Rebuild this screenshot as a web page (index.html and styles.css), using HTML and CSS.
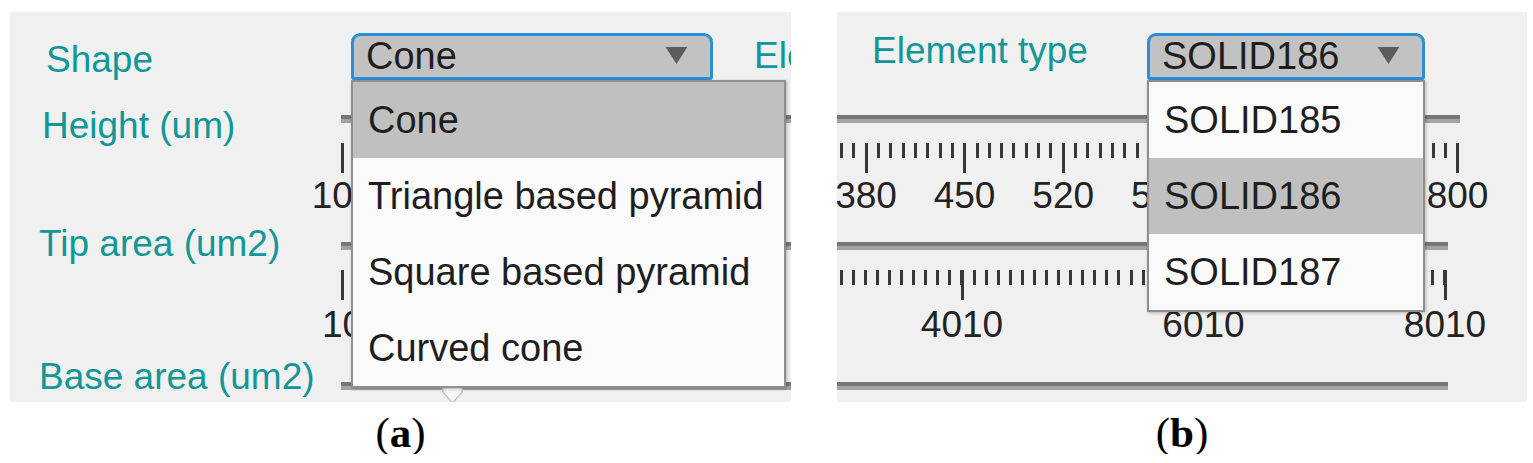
FILE: index.html
```html
<!DOCTYPE html>
<html lang="en">

<head>
    <meta charset="UTF-8">
    <meta name="viewport" content="width=device-width, initial-scale=1.0">
    <title>Indenter settings</title>
    <link rel="stylesheet" href="styles.css">
</head>

<body>
    <div class="figure">

        <!-- (a) shape dropdown -->
        <div class="subfigure subfigure-a">
            <div class="panel panel-a">
                <div class="label-column">
                    <div class="field-label shape-label">Shape</div>
                    <div class="field-label height-label">Height (um)</div>
                    <div class="field-label tip-label">Tip area (um2)</div>
                    <div class="field-label base-label">Base area (um2)</div>
                </div>

                <div class="control-column">
                    <div class="top-row">
                        <div class="dropdown dropdown-shape">
                            <span class="dropdown-value">Cone</span>
                            <svg class="dropdown-arrow" viewBox="0 0 23 18"><polygon points="0,0 23,0 11.5,18" /></svg>
                            <ul class="dropdown-list">
                                <li class="selected">Cone</li>
                                <li>Triangle based pyramid</li>
                                <li>Square based pyramid</li>
                                <li>Curved cone</li>
                            </ul>
                        </div>
                        <div class="field-label element-label-a">Element type</div>
                    </div>

                    <!-- tick labels under the open list are left out -->
                    <div class="slider slider-a slider-first">
                        <div class="slider-track"></div>
                        <div class="slider-ticks"></div>
                        <div class="slider-labels">
                            <span>100</span>
                        </div>
                    </div>

                    <div class="slider slider-a slider-second">
                        <div class="slider-track"></div>
                        <div class="slider-ticks"></div>
                        <div class="slider-labels">
                            <span>10</span>
                        </div>
                    </div>

                    <div class="slider slider-a slider-third">
                        <div class="slider-track"></div>
                        <svg class="slider-thumb" viewBox="0 0 21 22"><polygon points="0.75,0 0.75,10 10.5,21 20.25,10 20.25,0" /></svg>
                        <div class="slider-ticks"></div>
                    </div>
                </div>
            </div>
            <p class="caption">(<b>a</b>)</p>
        </div>

        <!-- (b) element type dropdown -->
        <div class="subfigure subfigure-b">
            <div class="panel panel-b">
                <div class="top-row">
                    <div class="field-label element-label-b">Element type</div>
                    <div class="dropdown dropdown-element">
                        <span class="dropdown-value">SOLID186</span>
                        <svg class="dropdown-arrow" viewBox="0 0 23 18"><polygon points="0,0 23,0 11.5,18" /></svg>
                        <ul class="dropdown-list">
                            <li>SOLID185</li>
                            <li class="selected">SOLID186</li>
                            <li>SOLID187</li>
                        </ul>
                    </div>
                </div>

                <div class="slider slider-b1 slider-first">
                    <div class="slider-track"></div>
                    <div class="slider-ticks"></div>
                    <div class="slider-labels">
                        <span>380</span><span>450</span><span>520</span><span>590</span><span></span><span></span><span>800</span>
                    </div>
                </div>

                <div class="slider slider-b2 slider-second">
                    <div class="slider-track"></div>
                    <div class="slider-ticks"></div>
                    <div class="slider-labels">
                        <span>4010</span><span>6010</span><span>8010</span>
                    </div>
                </div>

                <div class="slider slider-b2 slider-third">
                    <div class="slider-track"></div>
                    <div class="slider-ticks"></div>
                </div>
            </div>
            <p class="caption">(<b>b</b>)</p>
        </div>

    </div>
</body>

</html>
```

FILE: styles.css
```css
body {
    margin: 0;
    background-color: #fff;
    font-family: "Liberation Sans", Arial, sans-serif;
}

.figure {
    display: flex;
    gap: 46px;
    padding: 12px 0 0 10px;
}

.subfigure {
    display: flex;
    flex-direction: column;
}

.subfigure-a {
    width: 781px;
}

.subfigure-b {
    width: 690px;
}

.panel {
    position: relative;
    box-sizing: border-box;
    height: 390px;
    padding-top: 21px;
    overflow: hidden;
    background-color: #f0f0f0;
}

.panel-a {
    display: grid;
    grid-template-columns: 331px minmax(0, 1fr);
    align-items: start;
}

.control-column {
    min-width: 0;
}

/* labels */

.label-column {
    display: flex;
    flex-direction: column;
}

.field-label {
    font-size: 37px;
    line-height: 37px;
    color: #109797;
    white-space: nowrap;
}

.shape-label {
    margin-top: 8px;
    padding-left: 36px;
}

.height-label {
    margin-top: 29px;
    padding-left: 32px;
}

.tip-label {
    margin-top: 81px;
    padding-left: 29px;
}

.base-label {
    margin-top: 96px;
    padding-left: 29px;
}

/* this label runs past the panel edge */
.element-label-a {
    min-width: 0;
    margin: 4px 0 0 41px;
    overflow: hidden;
}

.element-label-b {
    box-sizing: border-box;
    width: 310px;
    margin-top: -1px;
    padding-left: 35px;
}

/* dropdown */

.top-row {
    display: flex;
    align-items: flex-start;
    height: 47px;
}

.dropdown {
    position: relative;
    z-index: 2;
    flex: none;
    box-sizing: border-box;
    height: 47px;
    padding-left: 12px;
    border: 3px solid #2b8ed6;
    border-radius: 9px 9px 3px 3px;
    background-color: #c2c2c2;
    font-size: 38px;
    line-height: 41px;
    color: #1e1e1e;
    white-space: nowrap;
}

.dropdown-shape {
    width: 362px;
    margin-left: 10px;
}

.dropdown-element {
    width: 278px;
}

.dropdown-arrow {
    position: absolute;
    top: 11px;
    right: 22px;
    width: 23px;
    height: 17px;
    fill: #5c5c5c;
}

.dropdown-list {
    position: absolute;
    top: calc(100% + 3px);
    left: -3px;
    box-sizing: border-box;
    margin: 0;
    padding: 0;
    list-style: none;
    border: 2px solid #8e8e8e;
    background-color: #fafafa;
    box-shadow: 1px 1px 3px rgba(0, 0, 0, 0.25);
}

.dropdown-shape .dropdown-list {
    width: 435px;
}

.dropdown-element .dropdown-list {
    width: 278px;
}

.dropdown-list li {
    height: 76px;
    padding-left: 15px;
    line-height: 76px;
    font-size: 38px;
    color: #1e1e1e;
}

.dropdown-list li.selected {
    background-color: #c0c0c0;
}

/* sliders */

.slider {
    position: relative;
}

.slider-first {
    margin-top: 35px;
}

.slider-second {
    margin-top: 28px;
}

.slider-third {
    margin-top: 39px;
}

.slider-a {
    --start: 1.5px;
    --label-start: 1.5px;
    --major: 98px;
    --minor: 12.25px;
    --count: 5;
}

.slider-b1 {
    --start: -69.6px;
    --label-start: 29px;
    --major: 98.6px;
    --minor: 12.325px;
    --count: 7;
}

.slider-b2 {
    --start: -116.5px;
    --label-start: 125px;
    --major: 241.5px;
    --minor: 12.075px;
    --count: 3;
}

.slider-track {
    height: 8px;
    margin-left: calc(var(--start) - 1.5px);
    width: calc(var(--count) * var(--major) + 4px);
    background: linear-gradient(#777 0 55%, #a3a3a3 55% 100%);
}

.slider-ticks {
    height: 30px;
    margin-top: 20px;
    margin-left: calc(var(--start) - 1.5px);
    width: calc(var(--count) * var(--major) + 3px);
    background:
        repeating-linear-gradient(to right, #383838 0 3px, transparent 3px var(--major)) 0 0 / 100% 30px no-repeat,
        repeating-linear-gradient(to right, #383838 0 3px, transparent 3px var(--minor)) 0 0 / 100% 15px no-repeat;
}

.slider-labels {
    display: flex;
    margin-top: 4px;
    margin-left: calc(var(--label-start) - var(--major) / 2);
    font-size: 37px;
    line-height: 37px;
    color: #222;
}

.slider-second .slider-labels {
    margin-top: 6px;
}

.slider-labels span {
    flex: none;
    width: var(--major);
    text-align: center;
}

.slider-thumb {
    position: absolute;
    top: 0;
    left: 101px;
    width: 21px;
    height: 22px;
    fill: #f6f6f6;
    stroke: #c4c4c4;
    stroke-width: 1.5;
}

/* captions */

.caption {
    margin: 9px 0 0;
    font-family: "Liberation Serif", "Times New Roman", serif;
    font-size: 43px;
    line-height: 43px;
    text-align: center;
    color: #000;
}
```
